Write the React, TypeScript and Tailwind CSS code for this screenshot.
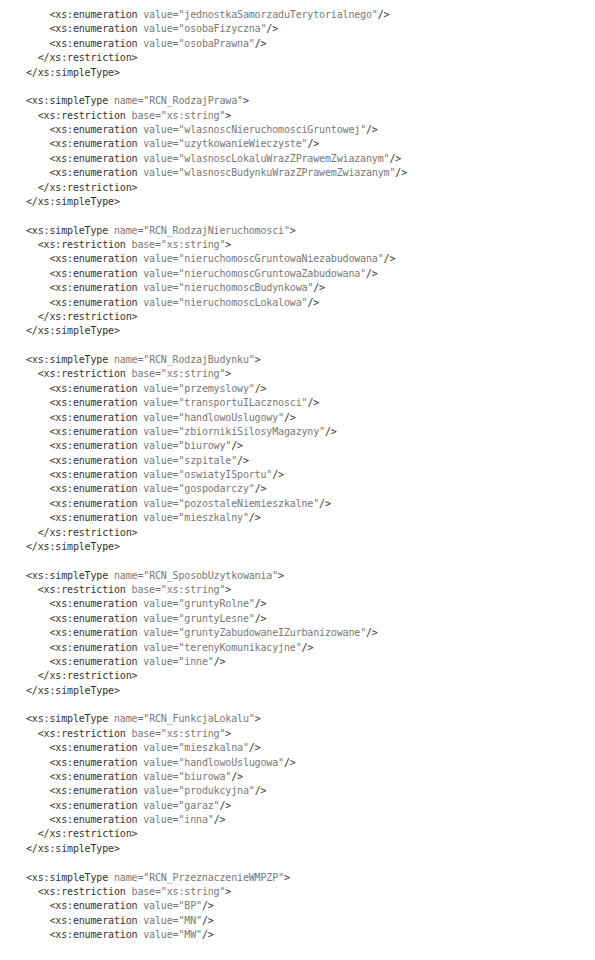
import React from "react";

type Line = { indent: number; tag: string; attr?: string; value?: string; close?: string };

const blocks: { name: string; values: string[] }[] = [
  { name: "RCN_RodzajPrawa", values: ["wlasnoscNieruchomosciGruntowej", "uzytkowanieWieczyste", "wlasnoscLokaluWrazZPrawemZwiazanym", "wlasnoscBudynkuWrazZPrawemZwiazanym"] },
  { name: "RCN_RodzajNieruchomosci", values: ["nieruchomoscGruntowaNiezabudowana", "nieruchomoscGruntowaZabudowana", "nieruchomoscBudynkowa", "nieruchomoscLokalowa"] },
  { name: "RCN_RodzajBudynku", values: ["przemyslowy", "transportuILacznosci", "handlowoUslugowy", "zbiornikiSilosyMagazyny", "biurowy", "szpitale", "oswiatyISportu", "gospodarczy", "pozostaleNiemieszkalne", "mieszkalny"] },
  { name: "RCN_SposobUzytkowania", values: ["gruntyRolne", "gruntyLesne", "gruntyZabudowaneIZurbanizowane", "terenyKomunikacyjne", "inne"] },
  { name: "RCN_FunkcjaLokalu", values: ["mieszkalna", "handlowoUslugowa", "biurowa", "produkcyjna", "garaz", "inna"] },
];

const enumLine = (v: string): Line => ({ indent: 2, tag: "<xs:enumeration", attr: "value", value: v, close: "/>" });

const lines: (Line | null)[] = [
  enumLine("jednostkaSamorzaduTerytorialnego"),
  enumLine("osobaFizyczna"),
  enumLine("osobaPrawna"),
  { indent: 1, tag: "</xs:restriction>" },
  { indent: 0, tag: "</xs:simpleType>" },
  null,
];

blocks.forEach((b) => {
  lines.push({ indent: 0, tag: "<xs:simpleType", attr: "name", value: b.name, close: ">" });
  lines.push({ indent: 1, tag: "<xs:restriction", attr: "base", value: "xs:string", close: ">" });
  b.values.forEach((v) => lines.push(enumLine(v)));
  lines.push({ indent: 1, tag: "</xs:restriction>" });
  lines.push({ indent: 0, tag: "</xs:simpleType>" });
  lines.push(null);
});

lines.push({ indent: 0, tag: "<xs:simpleType", attr: "name", value: "RCN_PrzeznaczenieWMPZP", close: ">" });
lines.push({ indent: 1, tag: "<xs:restriction", attr: "base", value: "xs:string", close: ">" });
["BP", "MN", "MW"].forEach((v) => lines.push(enumLine(v)));

export default function App() {
  return (
    <div className="w-[595px] h-[960px] bg-white overflow-hidden">
      <pre className="pt-[8px] pl-[26px] font-['DejaVu_Sans_Mono',monospace] text-[10px] tracking-[-0.16px] leading-[14.375px] text-[#333]">
        {lines.map((l, i) =>
          l === null ? (
            <div key={i}>&nbsp;</div>
          ) : (
            <div key={i}>
              {"  ".repeat(l.indent)}
              <span>{l.tag}</span>
              {l.attr && (
                <span className="text-[#777]">
                  {" "}
                  {l.attr}="{l.value}"
                </span>
              )}
              {l.close && <span>{l.close}</span>}
            </div>
          )
        )}
      </pre>
    </div>
  );
}
